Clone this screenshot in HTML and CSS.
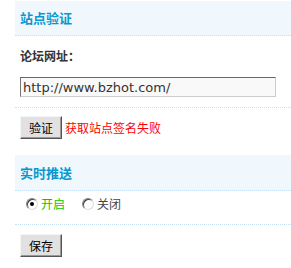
FILE: index.html
```html
<!DOCTYPE html>
<html lang="zh-CN">
<head>
    <meta charset="UTF-8">
    <title>站点验证</title>
    <link rel="stylesheet" href="styles.css">
</head>
<body>
    <div class="panel">
        <div class="sub-head">站点验证</div>
        <div class="field">
            <label class="field-label">论坛网址：</label>
            <input class="txt" type="text" value="http://www.bzhot.com/">
        </div>
        <div class="actions">
            <button class="btn">验证</button>
            <span class="msg-error">获取站点签名失败</span>
        </div>

        <div class="sub-head tall">实时推送</div>
        <div class="field radios">
            <label class="opt on"><input type="radio" name="push" checked> 开启</label>
            <label class="opt"><input type="radio" name="push"> 关闭</label>
        </div>
        <div class="actions last">
            <button class="btn">保存</button>
        </div>
    </div>
</body>
</html>
```

FILE: styles.css
```css
body {
    margin: 0;
    padding: 1px 0 0 15px;
    font-family: "Noto Sans CJK SC", "DejaVu Sans", sans-serif;
    font-size: 12px;
    color: #333;
    background: #fff;
}
.sub-head {
    height: 34px;
    line-height: 34px;
    padding-left: 5px;
    background: #f0f7fd;
    border-bottom: 1px dotted #c6e1f5;
    color: #0a97cf;
    font-size: 13px;
    font-weight: bold;
}
.sub-head.tall {
    height: 35px;
    line-height: 35px;
}
.field {
    padding: 12px 15px 10px 5px;
    border-bottom: 1px dotted #c6e1f5;
}
.field-label {
    display: block;
    line-height: 16px;
    margin-bottom: 13px;
    font-weight: bold;
}
.txt {
    display: block;
    box-sizing: border-box;
    width: 256px;
    height: 20px;
    margin: 0;
    padding: 0 2px;
    border: 1px solid #ccc;
    border-top-color: #666;
    border-left-color: #777;
    background: #f9f9f9;
    font-family: "DejaVu Sans", sans-serif;
    font-size: 13px;
    color: #333;
    outline: none;
}
.actions {
    display: flex;
    align-items: center;
    gap: 3px;
    padding: 8px 5px 16px;
}
.actions.last {
    padding-top: 9px;
}
.btn {
    box-sizing: border-box;
    height: 23px;
    margin: 0;
    padding: 0 8px;
    border: 1px solid;
    border-color: #f4f4f4 #555 #555 #f4f4f4;
    box-shadow: inset -1px -1px 0 #999;
    background: #e1e1e1;
    font-family: "Noto Sans CJK SC", sans-serif;
    font-size: 12px;
    color: #000;
}
.msg-error {
    color: #f00;
}
.radios {
    display: flex;
    align-items: flex-start;
    gap: 17px;
    height: 34px;
    padding: 5px 0 0 11px;
    box-sizing: border-box;
}
.opt {
    display: flex;
    align-items: center;
    line-height: 16px;
    color: #444;
}
.opt.on {
    color: #00cc00;
}
.opt input {
    appearance: none;
    -webkit-appearance: none;
    box-sizing: border-box;
    width: 12px;
    height: 12px;
    margin: 0 3px 0 0;
    border-radius: 50%;
    border: 1px solid;
    border-color: #808080 #ddd #ddd #808080;
    box-shadow: inset 1px 1px 0 #404040;
    background: #fff;
    position: relative;
}
.opt input:checked::after {
    content: "";
    position: absolute;
    left: 3px;
    top: 3px;
    width: 4px;
    height: 4px;
    border-radius: 50%;
    background: #000;
}
```
